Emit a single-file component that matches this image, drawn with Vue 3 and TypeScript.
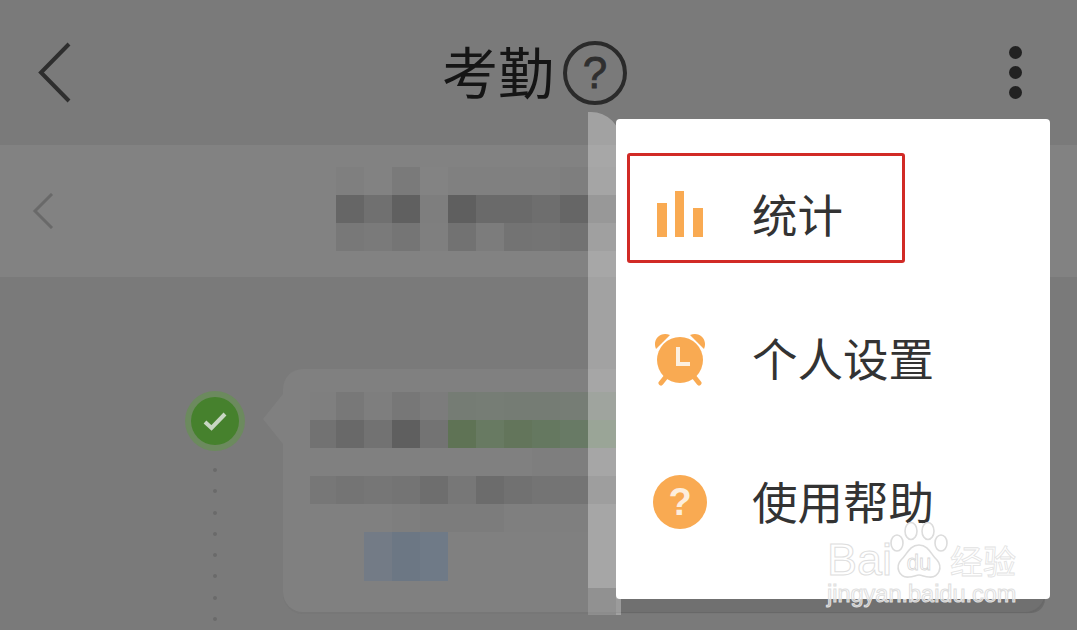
<script setup lang="ts">
const dateCells: number[][] = [
  [0x7f, 0x82, 0x7a, 0x83, 0x80, 0x80, 0x80, 0x80, 0x7e, 0x7e],
  [0x66, 0x70, 0x60, 0x7e, 0x5f, 0x6a, 0x6a, 0x6e, 0x66, 0x6c],
  [0x78, 0x7a, 0x75, 0x7f, 0x72, 0x7c, 0x73, 0x74, 0x72, 0x78]
]

const cardRows: string[][] = [
  ['#7f7f7f', '#787878', '#7e7e7e', '#777777', '#7c7c7c', '#757c74', '#767d75', '#757c74', '#757c74', '#767d75', '#767d75'],
  ['#727272', '#696969', '#727272', '#5f5f5f', '#737373', '#5f7355', '#687a62', '#63755b', '#657860', '#687a65', '#6f7e6b'],
  ['#808080', '#808080', '#808080', '#808080', '#808080', '#808080', '#808080', '#808080', '#7e7e7e', '#7e7e7e', '#808080'],
  ['#777777', '#747474', '#767676', '#747474', '#6e6e6e', '#777777', '#6c6c6c', '#717171', '#747474', '#747474', '#747474'],
  ['#808080', '#808080', '#808080', '#7e7e7e', '#7c7c7c', '#7c7c7c', '#7c7c7c', '#7f7f7f', '#7f7f7f', '#7f7f7f', '#808080']
]

const blueCells = ['#737b86', '#6c7784', '#6f7a87']
const dots = Array.from({ length: 8 }, (_, i) => i)

function grey(v: number) {
  return `rgb(${v}, ${v}, ${v})`
}
</script>

<template>
  <div class="page">
    <header class="top">
      <svg class="back" width="34" height="62" viewBox="0 0 34 62">
        <path d="M31 2 3 30.5 31 59" fill="none" stroke="#2e2e2e" stroke-width="4" />
      </svg>
      <div class="title">
        <span class="name">考勤</span>
        <span class="help">?</span>
      </div>
      <div class="more">
        <i></i>
        <i></i>
        <i></i>
      </div>
    </header>

    <section class="date-band">
      <svg class="date-back" width="22" height="36" viewBox="0 0 22 36">
        <path d="M20 1 3 18l17 17" fill="none" stroke="#696969" stroke-width="3" />
      </svg>
      <div class="mosaic date-mosaic">
        <template v-for="(row, r) in dateCells" :key="r">
          <span v-for="(v, c) in row" :key="c" :style="{ background: grey(v) }"></span>
        </template>
      </div>
    </section>

    <section class="timeline">
      <div class="status">
        <div class="halo">
          <div class="check">
            <svg width="28" height="22" viewBox="0 0 28 22">
              <path d="M4 12l6.5 6L24 4" fill="none" stroke="#c9d6c3" stroke-width="4" />
            </svg>
          </div>
        </div>
        <div class="dots">
          <i v-for="d in dots" :key="d"></i>
        </div>
      </div>
      <div class="card">
        <div class="mosaic card-mosaic">
          <template v-for="(row, r) in cardRows" :key="r">
            <span v-for="(c, i) in row" :key="i" :style="{ background: c }"></span>
          </template>
        </div>
        <div class="blue">
          <span v-for="c in blueCells" :key="c" :style="{ background: c }"></span>
        </div>
      </div>
    </section>

    <nav class="menu">
      <div class="item picked">
        <svg class="icon" width="54" height="54" viewBox="0 0 54 54">
          <path fill="#f9aa52" d="M4 15h10v34H4zM22 3h9v46h-9zM40 20h10v29H40z" />
        </svg>
        <span class="label">统计</span>
      </div>
      <div class="item">
        <svg class="icon" width="54" height="54" viewBox="0 0 54 54">
          <path fill="#f9aa52" d="M3 17C-1 8 7-1 17 3zM51 17C55 8 47-1 37 3z" />
          <circle cx="27" cy="28" r="23" fill="#f9aa52" />
          <path fill="none" stroke="#f9aa52" stroke-width="5" stroke-linecap="round" d="M12 46l-4 5M42 46l4 5" />
          <path fill="none" stroke="#fdf0e0" stroke-width="4" d="M25 15v17h12" />
        </svg>
        <span class="label">个人设置</span>
      </div>
      <div class="item">
        <div class="icon round">?</div>
        <span class="label">使用帮助</span>
      </div>
    </nav>

    <div class="strip"></div>

    <div class="watermark">
      <div class="logo">
        <span class="bai">Bai</span>
        <svg width="64" height="62" viewBox="0 0 64 62">
          <g fill="rgba(255,255,255,.45)" stroke="#dcdcdc" stroke-width="1.6">
            <ellipse cx="10" cy="22" rx="6" ry="8" />
            <ellipse cx="24" cy="10" rx="6" ry="8.5" />
            <ellipse cx="41" cy="10" rx="6" ry="8.5" />
            <ellipse cx="54" cy="22" rx="6" ry="8" />
            <path d="M32 24c10 0 12 10 18 15 6 7 2 18-8 17-4 0-7-2-10-2s-6 2-10 2c-10 1-14-10-8-17 6-5 8-15 18-15z" />
          </g>
          <text x="32" y="49" text-anchor="middle" class="du">du</text>
        </svg>
        <span class="jy">经验</span>
      </div>
      <div class="site">jingyan.baidu.com</div>
    </div>
  </div>
</template>

<style>
html,
body {
  margin: 0;
  background: #7a7a7a;
}
</style>

<style scoped>
.page {
  position: relative;
  width: 1077px;
  height: 630px;
  overflow: hidden;
  background: #7a7a7a;
  font-family: "Noto Sans CJK SC", "Liberation Sans", sans-serif;
}
.top {
  display: grid;
  grid-template-columns: 1fr auto 1fr;
  align-items: center;
  height: 145px;
  padding: 0 46px 0 38px;
  box-sizing: border-box;
}
.back {
  display: block;
}
.title {
  display: flex;
  align-items: center;
  gap: 9px;
  font-size: 56px;
  line-height: 64px;
  color: #151515;
}
.name {
  margin-top: -6px;
}
.help {
  width: 56px;
  height: 56px;
  border: 4px solid #2a2a2a;
  border-radius: 50%;
  font: 44px/56px "Liberation Sans", sans-serif;
  -webkit-text-stroke: 0.8px #2f2f2f;
  color: #2f2f2f;
  text-align: center;
}
.more {
  justify-self: end;
  display: flex;
  flex-direction: column;
  gap: 7px;
  margin-right: 9.5px;
}
.more i {
  width: 13px;
  height: 13px;
  border-radius: 50%;
  background: #222;
}
.date-band {
  display: flex;
  align-items: center;
  height: 132px;
  padding-left: 32px;
  background: #828282;
}
.date-back {
  flex: none;
}
.mosaic {
  display: grid;
  grid-auto-rows: 28px;
}
.date-mosaic {
  grid-template-columns: repeat(10, 28px);
  margin-left: 282px;
  margin-top: -4px;
}
.timeline {
  display: flex;
  align-items: flex-start;
  padding: 92px 0 0 185px;
}
.status {
  display: flex;
  flex-direction: column;
  align-items: center;
  margin-top: 22px;
}
.halo {
  display: flex;
  align-items: center;
  justify-content: center;
  width: 60px;
  height: 60px;
  border-radius: 50%;
  background: #6c8a5e;
}
.check {
  display: flex;
  align-items: center;
  justify-content: center;
  width: 48px;
  height: 48px;
  border-radius: 50%;
  background: #46812d;
}
.dots {
  display: flex;
  flex-direction: column;
  gap: 17.3px;
  margin-top: 17px;
}
.dots i {
  width: 4px;
  height: 4px;
  border-radius: 50%;
  background: #6a6a6a;
}
.card {
  position: relative;
  flex: none;
  width: 762px;
  height: 243px;
  margin-left: 38px;
  padding: 23px 0 0 27px;
  box-sizing: border-box;
  border-radius: 20px;
  background: #808080;
  box-shadow: 0 2px 0 #777;
}
.card::before {
  content: "";
  position: absolute;
  left: -20px;
  top: 25px;
  border-style: solid;
  border-width: 25px 20px 25px 0;
  border-color: transparent #808080 transparent transparent;
}
.card-mosaic {
  grid-template-columns: 26px repeat(10, 28px);
}
.blue {
  display: flex;
  height: 49px;
  margin-left: 54px;
}
.blue span {
  width: 28px;
}
.strip {
  position: absolute;
  left: 588px;
  top: 112px;
  width: 33px;
  height: 503px;
  border-radius: 0 30px 0 0;
  background: rgba(255, 255, 255, 0.3);
}
.strip::after {
  content: "";
  position: absolute;
  left: 0;
  bottom: 0;
  width: 28px;
  height: 27px;
  background: rgba(0, 0, 0, 0.12);
}
.menu {
  position: absolute;
  left: 616px;
  top: 119px;
  display: flex;
  flex-direction: column;
  gap: 33.5px;
  width: 434px;
  height: 480px;
  padding: 34px 11px;
  box-sizing: border-box;
  border-radius: 4px;
  background: #fff;
}
.menu::after {
  content: "";
  position: absolute;
  left: 0;
  right: 5px;
  top: 100%;
  height: 14px;
  border-radius: 0 0 18px 0;
  background: rgba(0, 0, 0, 0.12);
}
.item {
  display: flex;
  align-items: center;
  gap: 45px;
  flex: none;
  width: 278px;
  height: 110px;
  padding: 14px 0 0 23px;
  border: 3px solid transparent;
  border-radius: 3px;
  box-sizing: border-box;
  font-size: 45.5px;
  line-height: 56px;
  color: #333;
  white-space: nowrap;
}
.item.picked {
  border-color: #d12a26;
}
.label {
  margin-top: -4px;
}
.icon {
  display: block;
  flex: none;
  width: 54px;
  height: 54px;
}
.round {
  border-radius: 50%;
  background: #f9aa52;
  font: bold 38px/54px "Liberation Sans", sans-serif;
  color: #fdeedd;
  text-align: center;
}
.watermark {
  position: absolute;
  left: 827px;
  top: 520px;
  width: 200px;
  font-family: "Liberation Sans", sans-serif;
  color: rgba(255, 255, 255, 0.55);
  -webkit-text-stroke: 1px #dedede;
}
.logo {
  display: flex;
  align-items: flex-end;
  height: 60px;
  font-size: 45px;
  line-height: 40px;
}
.bai {
  width: 62px;
  white-space: nowrap;
}
.logo svg {
  flex: none;
  margin: 0 0 -3px -2px;
}
.du {
  font: 22px "Liberation Sans", sans-serif;
  fill: rgba(255, 255, 255, 0.6);
  stroke: #d8d8d8;
  stroke-width: 0.8;
}
.jy {
  margin-left: -1px;
  font: 33px/40px "Noto Sans CJK SC", sans-serif;
  color: #fff;
  -webkit-text-stroke: 0.8px #e2e2e2;
}
.site {
  margin-top: 0;
  font-size: 23.5px;
  line-height: 28px;
  white-space: nowrap;
}
</style>
